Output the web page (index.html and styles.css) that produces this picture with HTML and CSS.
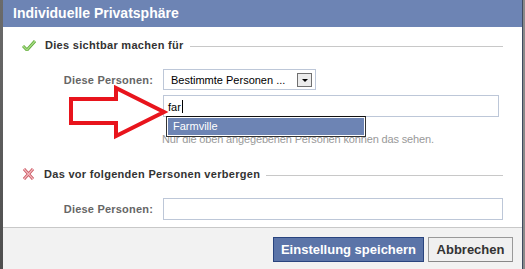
FILE: index.html
```html
<!DOCTYPE html>
<html lang="de">
<head>
    <meta charset="UTF-8">
    <title>Individuelle Privatsphäre</title>
    <link rel="stylesheet" href="styles.css">
</head>
<body>
    <div class="screen">
        <div class="edge-left"></div>
        <div class="dialog">
            <div class="dialog-title">Individuelle Privatsphäre</div>

            <div class="dialog-body">
                <!-- sichtbar machen -->
                <div class="section">
                    <div class="section-head">
                        <svg class="icon" width="14" height="12" viewBox="0 0 14 12">
                            <path d="M1 7 L5 11 L13 2" fill="none" stroke="#5fa83a" stroke-width="3" stroke-linejoin="round"/>
                            <path d="M1 7 L5 11 L13 2" fill="none" stroke="#a6dc82" stroke-width="1.4"/>
                        </svg>
                        <span class="section-title">Dies sichtbar machen für</span>
                        <span class="rule"></span>
                    </div>

                    <div class="row row-first">
                        <label class="row-label">Diese Personen:</label>
                        <div class="select">
                            <span class="select-text">Bestimmte Personen ...</span>
                            <span class="select-btn"><span class="tri"></span></span>
                        </div>
                    </div>

                    <div class="row row-input">
                        <span class="row-label"></span>
                        <div class="field-wrap">
                            <div class="field field-short">far<span class="caret"></span></div>
                            <div class="hint">Nur die oben angegebenen Personen können das sehen.</div>
                            <div class="suggest">
                                <div class="suggest-item">Farmville</div>
                            </div>
                        </div>
                    </div>

                    <svg class="pointer" width="104" height="56" viewBox="0 0 104 56">
                        <polygon points="3,14 48,14 48,3 96,27 48,51 48,38 3,38" fill="none" stroke="#e8141c" stroke-width="4" stroke-linejoin="miter"/>
                    </svg>
                </div>

                <!-- verbergen -->
                <div class="section section-hide">
                    <div class="section-head">
                        <svg class="icon" width="13" height="12" viewBox="0 0 13 12">
                            <path d="M2 1 L11 11 M11 1 L2 11" fill="none" stroke="#c9545e" stroke-width="3"/>
                            <path d="M2 1 L11 11 M11 1 L2 11" fill="none" stroke="#f2b8be" stroke-width="1.2"/>
                        </svg>
                        <span class="section-title">Das vor folgenden Personen verbergen</span>
                        <span class="rule"></span>
                    </div>

                    <div class="row row-hide">
                        <label class="row-label">Diese Personen:</label>
                        <div class="field field-long"></div>
                    </div>
                </div>
            </div>

            <div class="dialog-footer">
                <button class="btn btn-primary">Einstellung speichern</button>
                <button class="btn btn-cancel">Abbrechen</button>
            </div>
        </div>
        <div class="edge-right"></div>
    </div>
</body>
</html>
```

FILE: styles.css
```css
body {
    margin: 0;
    font-family: 'Liberation Sans', Arial, sans-serif;
    font-size: 11px;
    color: #333;
    background: #5a5a5a;
}

.screen {
    display: flex;
    width: 525px;
    height: 269px;
    overflow: hidden;
}

.edge-left {
    width: 3px;
    background: linear-gradient(#6b6b6b, #4e4e4e);
}

.edge-right {
    width: 2px;
    border-left: 1px solid #3f4a5f;
    background: #8a8a8a;
}

.dialog {
    width: 519px;
    display: flex;
    flex-direction: column;
    background: #fff;
}

.dialog-title {
    height: 27px;
    box-sizing: border-box;
    padding: 5px 0 0 10px;
    background: #6d84b4;
    color: #fff;
    font-size: 14px;
    font-weight: bold;
}

.dialog-body {
    height: 200px;
    position: relative;
}

.section {
    position: relative;
}

.section-head {
    display: flex;
    align-items: center;
    height: 12px;
    margin-top: 12px;
    padding-left: 19px;
}

.icon {
    margin-right: 9px;
}

.section-title {
    font-weight: bold;
    color: #333;
    letter-spacing: 0.3px;
    white-space: nowrap;
}

.rule {
    flex: 1;
    height: 1px;
    margin: 2px 19px 0 6px;
    background: #c8c8c8;
}

.row {
    display: flex;
    align-items: center;
}

.row-label {
    width: 150px;
    padding-right: 10px;
    text-align: right;
    font-weight: bold;
    color: #666;
    letter-spacing: 0.2px;
    white-space: nowrap;
}

.row-first {
    margin-top: 18px;
}

.select {
    display: flex;
    align-items: center;
    width: 141px;
    height: 19px;
    border: 1px solid #bdc7d8;
    padding: 0 3px 0 7px;
    box-sizing: content-box;
    font-size: 11px;
    color: #000;
}

.select-text {
    flex: 1;
    white-space: nowrap;
}

.select-btn {
    width: 13px;
    height: 12px;
    border: 1px solid #707070;
    background: #ececec;
    display: flex;
    align-items: center;
    justify-content: center;
}

.tri {
    width: 0;
    height: 0;
    border-left: 3px solid transparent;
    border-right: 3px solid transparent;
    border-top: 3px solid #000;
    margin-top: 2px;
}

.row-input {
    margin-top: 5px;
    align-items: flex-start;
}

.field-wrap {
    position: relative;
}

.field {
    height: 20px;
    border: 1px solid #bdc7d8;
    box-sizing: border-box;
    padding: 3px 4px;
    color: #000;
    font-size: 11px;
    line-height: 13px;
    background: #fff;
}

.field-short {
    width: 336px;
    height: 22px;
    padding-top: 4px;
}

.field-long {
    width: 340px;
    height: 22px;
}

.caret {
    display: inline-block;
    width: 1px;
    height: 13px;
    margin-left: 1px;
    vertical-align: -2px;
    background: #000;
}

.hint {
    margin-top: 16px;
    margin-left: -1px;
    color: #999;
    letter-spacing: -0.15px;
    white-space: nowrap;
}

.suggest {
    position: absolute;
    top: 21px;
    left: 3px;
    width: 198px;
    border: 1px solid #333;
    border-top-color: #111;
    background: #fff;
}

.suggest-item {
    margin: 1px;
    height: 17px;
    padding-left: 5px;
    line-height: 17px;
    background: #6d84b4;
    color: #fff;
    font-size: 11px;
}

.pointer {
    position: absolute;
    left: 65px;
    top: 46px;
}

.section-hide {
    margin-top: 23px;
}

.row-hide {
    margin-top: 18px;
}

.dialog-footer {
    flex: 1;
    display: flex;
    justify-content: flex-end;
    align-items: flex-start;
    gap: 4px;
    padding: 9px 9px 0 0;
    border-top: 1px solid #c8c8c8;
    background: #f2f2f2;
}

.btn {
    height: 25px;
    padding: 0 6px;
    font-family: 'Liberation Sans', Arial, sans-serif;
    font-size: 13px;
    font-weight: bold;
    color: #333;
    background: #f0f0f0;
    border: 1px solid #999;
    border-bottom-color: #888;
}

.btn-primary {
    width: 151px;
    color: #fff;
    background: #5b74a8;
    border-color: #29447e;
}

.btn-cancel {
    width: 85px;
}
```
